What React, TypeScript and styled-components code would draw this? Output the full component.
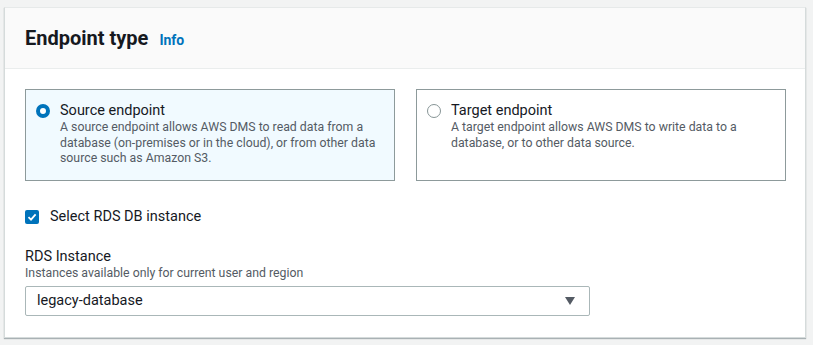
import React from "react"
import styled, { createGlobalStyle } from "styled-components"

const GlobalStyle = createGlobalStyle`
  html, body {
    margin: 0;
    padding: 0;
    background: #f2f3f3;
    font-family: Roboto, "Liberation Sans", Arial, sans-serif;
    color: #16191f;
  }
`

const Page = styled.div`
  padding: 7px 7px 9px 4px;
`

const Container = styled.section`
  background: #ffffff;
  border: 1px solid #d5dbdb;
  border-top-color: #e6e9e9;
  box-shadow: 0 1px 1px 0 rgba(0, 28, 36, 0.3);
`

const Header = styled.div`
  display: flex;
  align-items: baseline;
  gap: 11px;
  height: 61px;
  box-sizing: border-box;
  padding: 18px 20px 0 20px;
  background: #fafafa;
  border-bottom: 1px solid #eaeded;
`

const Title = styled.h2`
  margin: 0;
  font-size: 20px;
  line-height: 24px;
  font-weight: 700;
  color: #16191f;
`

const InfoLink = styled.a`
  font-size: 14px;
  font-weight: 700;
  color: #0073bb;
  text-decoration: none;
`

const Body = styled.div`
  padding: 20px 20px 21px 20px;
`

const Tiles = styled.div`
  display: grid;
  grid-template-columns: 370px 370px;
  column-gap: 21px;
`

const Tile = styled.label<{ $selected?: boolean }>`
  display: flex;
  gap: 10px;
  height: 92px;
  box-sizing: border-box;
  padding: 12px 10px 0 10px;
  border: 1px solid #8d9a9b;
  background: ${(p) => (p.$selected ? "#f1faff" : "#ffffff")};
`

const Radio = styled.span<{ $checked?: boolean }>`
  flex: none;
  width: 14px;
  height: 14px;
  margin-top: 2px;
  border-radius: 50%;
  box-sizing: border-box;
  border: ${(p) => (p.$checked ? "4px solid #0073bb" : "1px solid #879596")};
  background: #ffffff;
`

const TileText = styled.div`
  display: flex;
  flex-direction: column;
`

const TileTitle = styled.span`
  font-size: 14.5px;
  line-height: 18px;
  color: #16191f;
`

const Description = styled.span`
  font-size: 12.3px;
  line-height: 15.5px;
  color: #545b64;
`

const CheckRow = styled.label`
  display: flex;
  align-items: center;
  gap: 11px;
  margin-top: 27px;
  font-size: 14.5px;
  line-height: 18px;
`

const CheckBox = styled.span`
  flex: none;
  width: 14px;
  height: 14px;
  border-radius: 2px;
  background: #0073bb;
  display: flex;
  align-items: center;
  justify-content: center;
`

const Field = styled.div`
  display: flex;
  flex-direction: column;
  margin-top: 22px;
`

const FieldLabel = styled.span`
  font-size: 14.5px;
  line-height: 18px;
  color: #16191f;
`

const Select = styled.div`
  display: flex;
  align-items: center;
  justify-content: space-between;
  width: 565px;
  height: 30px;
  box-sizing: border-box;
  margin-top: 4px;
  padding: 0 14px 0 11px;
  border: 1px solid #aab7b8;
  border-radius: 2px;
  font-size: 14.5px;
  color: #16191f;
`

const Caret = styled.span`
  width: 0;
  height: 0;
  border-left: 5px solid transparent;
  border-right: 5px solid transparent;
  border-top: 8px solid #545b64;
`

const App = () => {
  return (
    <Page>
      <GlobalStyle />
      <Container>
        <Header>
          <Title>Endpoint type</Title>
          <InfoLink href="#">Info</InfoLink>
        </Header>
        <Body>
          <Tiles>
            <Tile $selected>
              <Radio $checked />
              <TileText>
                <TileTitle>Source endpoint</TileTitle>
                <Description>
                  A source endpoint allows AWS DMS to read data from a database (on-premises or in the cloud), or from other data source such as Amazon S3.
                </Description>
              </TileText>
            </Tile>
            <Tile>
              <Radio />
              <TileText>
                <TileTitle>Target endpoint</TileTitle>
                <Description>A target endpoint allows AWS DMS to write data to a database, or to other data source.</Description>
              </TileText>
            </Tile>
          </Tiles>
          <CheckRow>
            <CheckBox>
              <svg width="10" height="10" viewBox="0 0 10 10">
                <path d="M1.5 5.2 L4 7.6 L8.6 2.4" fill="none" stroke="#fff" strokeWidth="1.8" />
              </svg>
            </CheckBox>
            Select RDS DB instance
          </CheckRow>
          <Field>
            <FieldLabel>RDS Instance</FieldLabel>
            <Description>Instances available only for current user and region</Description>
            <Select>
              legacy-database
              <Caret />
            </Select>
          </Field>
        </Body>
      </Container>
    </Page>
  )
}

export default App
